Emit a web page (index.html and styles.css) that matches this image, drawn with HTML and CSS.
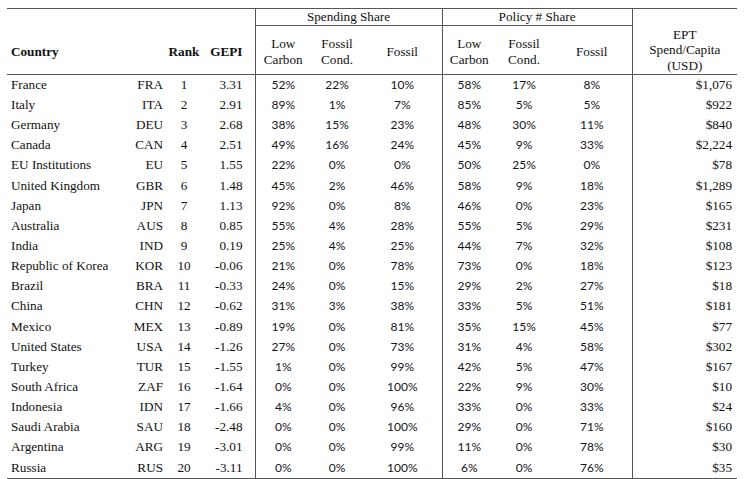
FILE: index.html
```html
<!DOCTYPE html>
<html>
<head>
<meta charset="utf-8">
<link rel="stylesheet" href="styles.css">
</head>
<body>
<table class="gepi">
  <colgroup>
    <col class="c-country"><col class="c-code"><col class="c-rank"><col class="c-gepi">
    <col class="c-s1"><col class="c-s2"><col class="c-s3">
    <col class="c-p1"><col class="c-p2"><col class="c-p3">
    <col class="c-ept">
  </colgroup>
  <thead>
    <tr class="h1">
      <th></th><th></th><th></th><th></th>
      <th colspan="3" class="group vl">Spending Share</th>
      <th colspan="3" class="group vl">Policy # Share</th>
      <th rowspan="2" class="vl ept-h">EPT<br>Spend/Capita<br>(USD)</th>
    </tr>
    <tr class="h2">
      <th class="country b">Country</th>
      <th></th>
      <th class="rank b">Rank</th>
      <th class="gepi-v b">GEPI</th>
      <th class="vl sub">Low<br>Carbon</th>
      <th class="sub">Fossil<br>Cond.</th>
      <th class="sub">Fossil</th>
      <th class="vl sub">Low<br>Carbon</th>
      <th class="sub">Fossil<br>Cond.</th>
      <th class="sub">Fossil</th>
    </tr>
  </thead>
  <tbody>
    <tr><td class="country">France</td><td class="code">FRA</td><td class="rank">1</td><td class="gepi-v">3.31</td><td class="pct vl">52%</td><td class="pct">22%</td><td class="pct">10%</td><td class="pct vl">58%</td><td class="pct">17%</td><td class="pct">8%</td><td class="usd vl">$1,076</td></tr>
    <tr><td class="country">Italy</td><td class="code">ITA</td><td class="rank">2</td><td class="gepi-v">2.91</td><td class="pct vl">89%</td><td class="pct">1%</td><td class="pct">7%</td><td class="pct vl">85%</td><td class="pct">5%</td><td class="pct">5%</td><td class="usd vl">$922</td></tr>
    <tr><td class="country">Germany</td><td class="code">DEU</td><td class="rank">3</td><td class="gepi-v">2.68</td><td class="pct vl">38%</td><td class="pct">15%</td><td class="pct">23%</td><td class="pct vl">48%</td><td class="pct">30%</td><td class="pct">11%</td><td class="usd vl">$840</td></tr>
    <tr><td class="country">Canada</td><td class="code">CAN</td><td class="rank">4</td><td class="gepi-v">2.51</td><td class="pct vl">49%</td><td class="pct">16%</td><td class="pct">24%</td><td class="pct vl">45%</td><td class="pct">9%</td><td class="pct">33%</td><td class="usd vl">$2,224</td></tr>
    <tr><td class="country">EU Institutions</td><td class="code">EU</td><td class="rank">5</td><td class="gepi-v">1.55</td><td class="pct vl">22%</td><td class="pct">0%</td><td class="pct">0%</td><td class="pct vl">50%</td><td class="pct">25%</td><td class="pct">0%</td><td class="usd vl">$78</td></tr>
    <tr><td class="country">United Kingdom</td><td class="code">GBR</td><td class="rank">6</td><td class="gepi-v">1.48</td><td class="pct vl">45%</td><td class="pct">2%</td><td class="pct">46%</td><td class="pct vl">58%</td><td class="pct">9%</td><td class="pct">18%</td><td class="usd vl">$1,289</td></tr>
    <tr><td class="country">Japan</td><td class="code">JPN</td><td class="rank">7</td><td class="gepi-v">1.13</td><td class="pct vl">92%</td><td class="pct">0%</td><td class="pct">8%</td><td class="pct vl">46%</td><td class="pct">0%</td><td class="pct">23%</td><td class="usd vl">$165</td></tr>
    <tr><td class="country">Australia</td><td class="code">AUS</td><td class="rank">8</td><td class="gepi-v">0.85</td><td class="pct vl">55%</td><td class="pct">4%</td><td class="pct">28%</td><td class="pct vl">55%</td><td class="pct">5%</td><td class="pct">29%</td><td class="usd vl">$231</td></tr>
    <tr><td class="country">India</td><td class="code">IND</td><td class="rank">9</td><td class="gepi-v">0.19</td><td class="pct vl">25%</td><td class="pct">4%</td><td class="pct">25%</td><td class="pct vl">44%</td><td class="pct">7%</td><td class="pct">32%</td><td class="usd vl">$108</td></tr>
    <tr><td class="country">Republic of Korea</td><td class="code">KOR</td><td class="rank">10</td><td class="gepi-v">-0.06</td><td class="pct vl">21%</td><td class="pct">0%</td><td class="pct">78%</td><td class="pct vl">73%</td><td class="pct">0%</td><td class="pct">18%</td><td class="usd vl">$123</td></tr>
    <tr><td class="country">Brazil</td><td class="code">BRA</td><td class="rank">11</td><td class="gepi-v">-0.33</td><td class="pct vl">24%</td><td class="pct">0%</td><td class="pct">15%</td><td class="pct vl">29%</td><td class="pct">2%</td><td class="pct">27%</td><td class="usd vl">$18</td></tr>
    <tr><td class="country">China</td><td class="code">CHN</td><td class="rank">12</td><td class="gepi-v">-0.62</td><td class="pct vl">31%</td><td class="pct">3%</td><td class="pct">38%</td><td class="pct vl">33%</td><td class="pct">5%</td><td class="pct">51%</td><td class="usd vl">$181</td></tr>
    <tr><td class="country">Mexico</td><td class="code">MEX</td><td class="rank">13</td><td class="gepi-v">-0.89</td><td class="pct vl">19%</td><td class="pct">0%</td><td class="pct">81%</td><td class="pct vl">35%</td><td class="pct">15%</td><td class="pct">45%</td><td class="usd vl">$77</td></tr>
    <tr><td class="country">United States</td><td class="code">USA</td><td class="rank">14</td><td class="gepi-v">-1.26</td><td class="pct vl">27%</td><td class="pct">0%</td><td class="pct">73%</td><td class="pct vl">31%</td><td class="pct">4%</td><td class="pct">58%</td><td class="usd vl">$302</td></tr>
    <tr><td class="country">Turkey</td><td class="code">TUR</td><td class="rank">15</td><td class="gepi-v">-1.55</td><td class="pct vl">1%</td><td class="pct">0%</td><td class="pct">99%</td><td class="pct vl">42%</td><td class="pct">5%</td><td class="pct">47%</td><td class="usd vl">$167</td></tr>
    <tr><td class="country">South Africa</td><td class="code">ZAF</td><td class="rank">16</td><td class="gepi-v">-1.64</td><td class="pct vl">0%</td><td class="pct">0%</td><td class="pct">100%</td><td class="pct vl">22%</td><td class="pct">9%</td><td class="pct">30%</td><td class="usd vl">$10</td></tr>
    <tr><td class="country">Indonesia</td><td class="code">IDN</td><td class="rank">17</td><td class="gepi-v">-1.66</td><td class="pct vl">4%</td><td class="pct">0%</td><td class="pct">96%</td><td class="pct vl">33%</td><td class="pct">0%</td><td class="pct">33%</td><td class="usd vl">$24</td></tr>
    <tr><td class="country">Saudi Arabia</td><td class="code">SAU</td><td class="rank">18</td><td class="gepi-v">-2.48</td><td class="pct vl">0%</td><td class="pct">0%</td><td class="pct">100%</td><td class="pct vl">29%</td><td class="pct">0%</td><td class="pct">71%</td><td class="usd vl">$160</td></tr>
    <tr><td class="country">Argentina</td><td class="code">ARG</td><td class="rank">19</td><td class="gepi-v">-3.01</td><td class="pct vl">0%</td><td class="pct">0%</td><td class="pct">99%</td><td class="pct vl">11%</td><td class="pct">0%</td><td class="pct">78%</td><td class="usd vl">$30</td></tr>
    <tr class="last"><td class="country">Russia</td><td class="code">RUS</td><td class="rank">20</td><td class="gepi-v">-3.11</td><td class="pct vl">0%</td><td class="pct">0%</td><td class="pct">100%</td><td class="pct vl">6%</td><td class="pct">0%</td><td class="pct">76%</td><td class="usd vl">$35</td></tr>
  </tbody>
</table>
</body>
</html>
```
FILE: styles.css
```css
html, body {
  margin: 0;
  padding: 0;
  background: #ffffff;
}

body {
  font-family: "Liberation Serif", "Times New Roman", serif;
  font-size: 13.2px;
  color: #111111;
}

.gepi {
  margin: 8px 0 0 7px;
  width: 730px;
  table-layout: fixed;
  border-collapse: collapse;
  font-family: "Liberation Serif", "Times New Roman", serif;
  font-size: 13.2px;
}

.c-country { width: 118px; }
.c-code { width: 41px; }
.c-rank { width: 36px; }
.c-gepi { width: 53px; }
.c-s1 { width: 56px; }
.c-s2 { width: 52px; }
.c-s3 { width: 79px; }
.c-p1 { width: 54px; }
.c-p2 { width: 56px; }
.c-p3 { width: 80px; }
.c-ept { width: 105px; }

.gepi th,
.gepi td {
  padding: 0;
  font-family: "Liberation Serif", "Times New Roman", serif;
  font-size: 13.2px;
  font-weight: normal;
  color: #111111;
  white-space: nowrap;
}

.gepi .vl {
  border-left: 1px solid #555555;
}

.h1 th {
  border-top: 1px solid #555555;
  height: 16px;
  line-height: 16px;
  vertical-align: middle;
}

.h1 .group {
  border-bottom: 1px solid #555555;
  text-align: center;
}

.h2 th {
  height: 44px;
  border-bottom: 1px solid #555555;
  vertical-align: middle;
  padding-top: 4px;
}

.h2 .sub {
  text-align: center;
  line-height: 16px;
}

.gepi .ept-h {
  text-align: center;
  vertical-align: bottom;
  line-height: 15.5px;
  padding-bottom: 1px;
  border-bottom: 1px solid #555555;
}

.gepi .b {
  font-weight: bold;
}

.gepi tbody tr {
  height: 20.15px;
}

.gepi tbody td {
  line-height: 20px;
  vertical-align: middle;
}

.gepi tbody tr.last td {
  border-bottom: 1px solid #555555;
}

.gepi .country {
  text-align: left;
  padding-left: 4px;
}

.gepi .code {
  text-align: right;
  padding-right: 3px;
}

.gepi .rank {
  text-align: center;
}

.gepi .gepi-v {
  text-align: right;
  padding-right: 12px;
}

.gepi .pct {
  text-align: center;
  font-family: "Lato", "Liberation Sans", sans-serif;
  font-size: 12px;
  color: #141420;
}

.gepi .usd {
  text-align: right;
  padding-right: 5px;
}
```
